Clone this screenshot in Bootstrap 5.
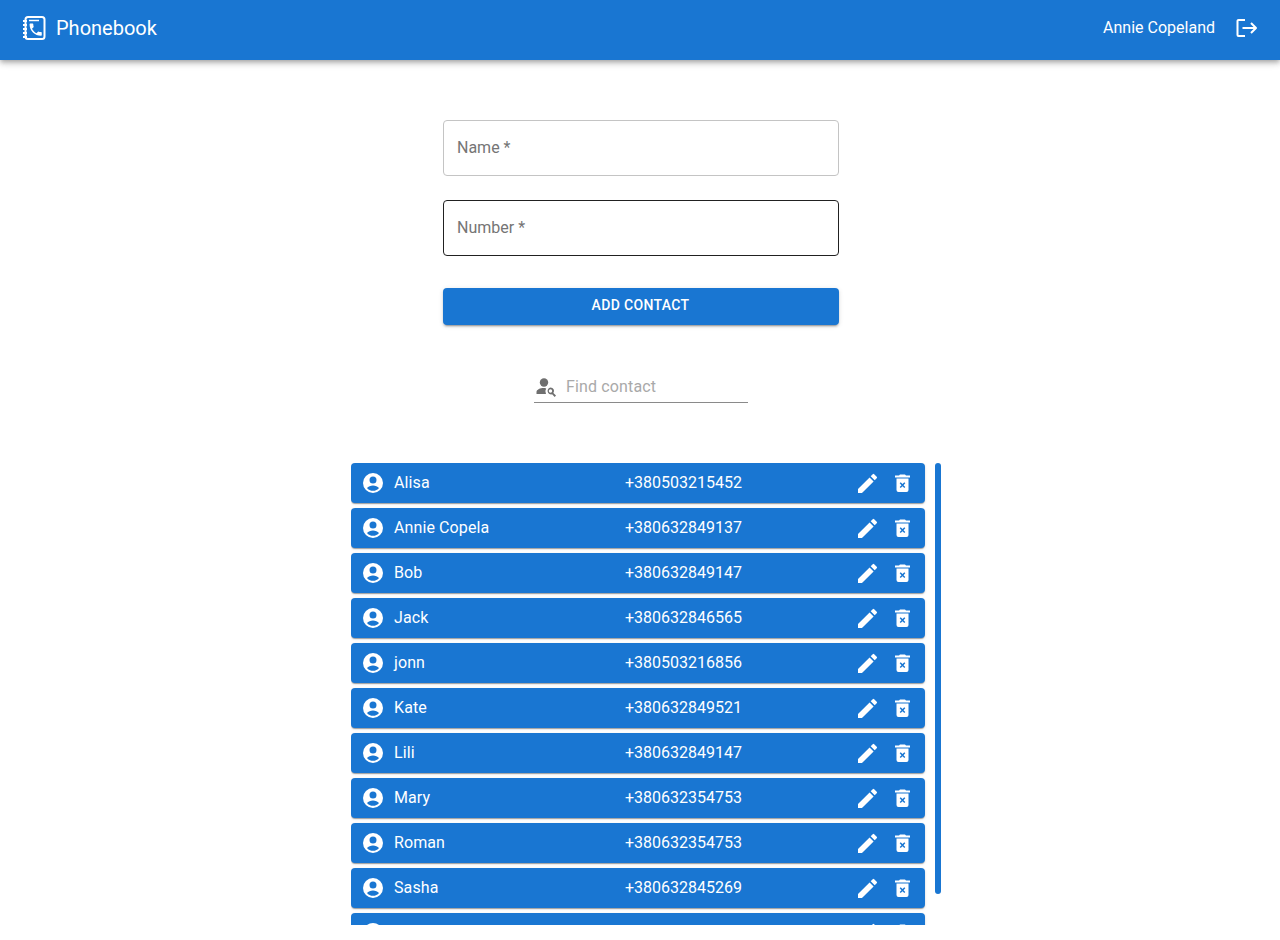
<!DOCTYPE html>
<html lang="en">
<head>
<meta charset="utf-8">
<title>Phonebook</title>
<link href="https://cdn.jsdelivr.net/npm/bootstrap@5.3.0/dist/css/bootstrap.min.css" rel="stylesheet">
<style>
html,body{height:940px;overflow:hidden;background:#fff}
body{font-family:Roboto,"Liberation Sans",sans-serif;color:#212121}
.pb-bar{height:60px;background:#1976d2;color:#fff;padding:0 22px 4px 22px;box-shadow:0 2px 4px -1px rgba(0,0,0,.2),0 4px 5px 0 rgba(0,0,0,.14),0 1px 10px 0 rgba(0,0,0,.12);position:relative;z-index:2}
.pb-title{font-size:20px;font-weight:400;line-height:1;margin-left:10px}
.pb-user{font-size:16px;line-height:1}
.pb-form{width:396px;margin:60px auto 0 443px}
.pb-field{display:block;width:100%;height:56px;border:1px solid #c4c4c4;border-radius:4px;padding:0 13px 2px 13px;font-size:16px;color:#212121;outline:0;margin-bottom:24px;background:#fff}
.pb-field.pb-focus{border-color:#212121}
.pb-field::placeholder{color:#757575;opacity:1}
.pb-add{display:block;width:100%;height:37px;margin-top:32px;padding:0 1px 2px 0;background:#1976d2;color:#fff;border:0;border-radius:4px;font-size:14px;font-weight:500;letter-spacing:.35px;text-transform:uppercase;box-shadow:0 3px 1px -2px rgba(0,0,0,.2),0 2px 2px 0 rgba(0,0,0,.14),0 1px 5px 0 rgba(0,0,0,.12)}
.pb-find{width:214px;height:32px;margin:46px 0 0 534px;border-bottom:1px solid #8a8a8a}
.pb-find input{border:0;outline:0;flex:1;min-width:0;font-size:16px;padding:0;margin-left:9px;letter-spacing:.15px;background:transparent;color:#212121}
.pb-find input::placeholder{color:#a9a9a9;opacity:1}
.pb-list-wrap{position:absolute;left:351px;top:463px;width:590px;height:462px;overflow:hidden}
.pb-list{width:574px;margin:0;padding:0;list-style:none}
.pb-row{height:40px;margin-bottom:5px;background:#1976d2;color:#fff;border-radius:4px;padding:0 15px 1px 12px;font-size:16px;font-weight:400;box-shadow:0 2px 1px -1px rgba(0,0,0,.2),0 1px 1px 0 rgba(0,0,0,.14),0 1px 3px 0 rgba(0,0,0,.12)}
.pb-name{width:231px;height:24px;line-height:24px;margin-left:11px;letter-spacing:.1px}
.pb-phone{flex:1;height:24px;line-height:24px}
.pb-thumb{position:absolute;left:584px;top:0;width:6px;height:431px;background:#1976d2;border-radius:3px}
.pb-ic{display:block;flex:none;fill:currentColor}
.pb-logo{fill:none;stroke:#fff;stroke-width:2}
.pb-logo .pb-handset{fill:#fff;stroke:none}
.pb-logout{fill:none;stroke:#fff;stroke-width:2;margin-left:21px}
.pb-search{color:#6f6f6f;margin-left:1px}
.pb-pen{margin-right:-1px}
.pb-del{margin-left:18px;margin-top:1px}
</style>
</head>
<body>
<header class="pb-bar d-flex align-items-center justify-content-between">
  <div class="d-flex align-items-center">
    <svg class="pb-ic pb-logo" width="24" height="26" viewBox="0 0 24 26"><rect x="3.500" y="2" width="19" height="22" rx="2.500"/><path d="M1 6h4M1 10h4M1 14h4M1 18h4M1 22h4"/><path d="M7 5.500h10" stroke-width="1.500"/><path class="pb-handset" transform="translate(5.500 6.500) scale(.68)" d="M6.620 10.790c1.440 2.830 3.760 5.140 6.590 6.590l2.200-2.200c.27-.27.67-.36 1.020-.24 1.120.37 2.330.57 3.570.57.55 0 1 .45 1 1V20c0 .55-.45 1-1 1-9.390 0-17-7.610-17-17 0-.55.45-1 1-1h3.500c.55 0 1 .45 1 1 0 1.250.2 2.450.57 3.570.11.35.03.74-.25 1.020l-2.200 2.200z"/></svg>
    <span class="pb-title">Phonebook</span>
  </div>
  <div class="d-flex align-items-center">
    <span class="pb-user">Annie Copeland</span>
    <svg class="pb-ic pb-logout" width="22" height="20" viewBox="0 0 22 20"><path d="M9 2H2.500a1 1 0 0 0-1 1v14a1 1 0 0 0 1 1H9"/><path d="M6.500 10H20M15 5l5 5-5 5" stroke-linejoin="round"/></svg>
  </div>
</header>
<form class="pb-form">
  <input class="pb-field" type="text" placeholder="Name *">
  <input class="pb-field pb-focus mb-0" type="text" placeholder="Number *">
  <button class="pb-add" type="button">Add contact</button>
</form>
<div class="pb-find d-flex align-items-center">
  <svg class="pb-ic pb-search" width="22" height="22" viewBox="0 0 22 22"><circle cx="9" cy="6.500" r="4.200"/><path d="M1.500 18v-2c0-2.500 4-4 7-4 .9 0 1.800.1 2.700.4A5.500 5.500 0 0 0 11 18z"/><path fill-rule="evenodd" d="M15.500 11.500a3.500 3.500 0 0 1 2.900 5.500l2.600 2.600-1.300 1.300-2.600-2.600a3.500 3.500 0 1 1-1.600-6.800zm0 1.800a1.700 1.700 0 1 0 0 3.400 1.700 1.700 0 0 0 0-3.400z"/></svg>
  <input type="text" placeholder="Find contact">
</div>
<div class="pb-list-wrap">
  <ul class="pb-list" id="pb-list"></ul>
  <div class="pb-thumb"></div>
</div>
<script>
var data=[["Alisa","+380503215452"],["Annie Copela","+380632849137"],["Bob","+380632849147"],["Jack","+380632846565"],["jonn","+380503216856"],["Kate","+380632849521"],["Lili","+380632849147"],["Mary","+380632354753"],["Roman","+380632354753"],["Sasha","+380632845269"],["",""]];
var user='<svg class="pb-ic" width="20" height="20" viewBox="0 0 20 20"><path fill-rule="evenodd" d="M10 0a10 10 0 1 1 0 20 10 10 0 0 1 0-20zm0 3.500a3.500 3.500 0 1 0 0 7 3.500 3.500 0 0 0 0-7zM4 15c1.300 1.900 3.500 2.800 6 2.800s4.700-.9 6-2.800c-1.300-1.500-3.600-2.500-6-2.500S5.300 13.500 4 15z"/></svg>';
var pen='<svg class="pb-ic pb-pen" width="20" height="20" viewBox="0 0 20 20"><path d="M0 16v4h4L15.600 8.400l-4-4zM18.700 5.300a1 1 0 0 0 0-1.500l-2.500-2.500a1 1 0 0 0-1.500 0l-2 2 4 4z"/></svg>';
var bin='<svg class="pb-ic pb-del" width="15" height="18" viewBox="0 0 15 18"><path fill-rule="evenodd" d="M0 1.500h4L5 .5h5l1 1h4v2H0zM1.500 4.500h12V16a2 2 0 0 1-2 2h-8a2 2 0 0 1-2-2zM5.700 8.300 4.700 9.300 6.500 11.200 4.700 13 5.700 14 7.500 12.200 9.300 14 10.300 13 8.500 11.200 10.300 9.300 9.300 8.300 7.500 10.100z"/></svg>';
document.getElementById('pb-list').innerHTML=data.map(function(d){
  return '<li class="pb-row d-flex align-items-center">'+user+'<span class="pb-name">'+d[0]+'</span><span class="pb-phone">'+d[1]+'</span>'+pen+bin+'</li>';
}).join('');
</script>
<script src="https://cdn.jsdelivr.net/npm/bootstrap@5.3.0/dist/js/bootstrap.bundle.min.js"></script>
</body>
</html>
